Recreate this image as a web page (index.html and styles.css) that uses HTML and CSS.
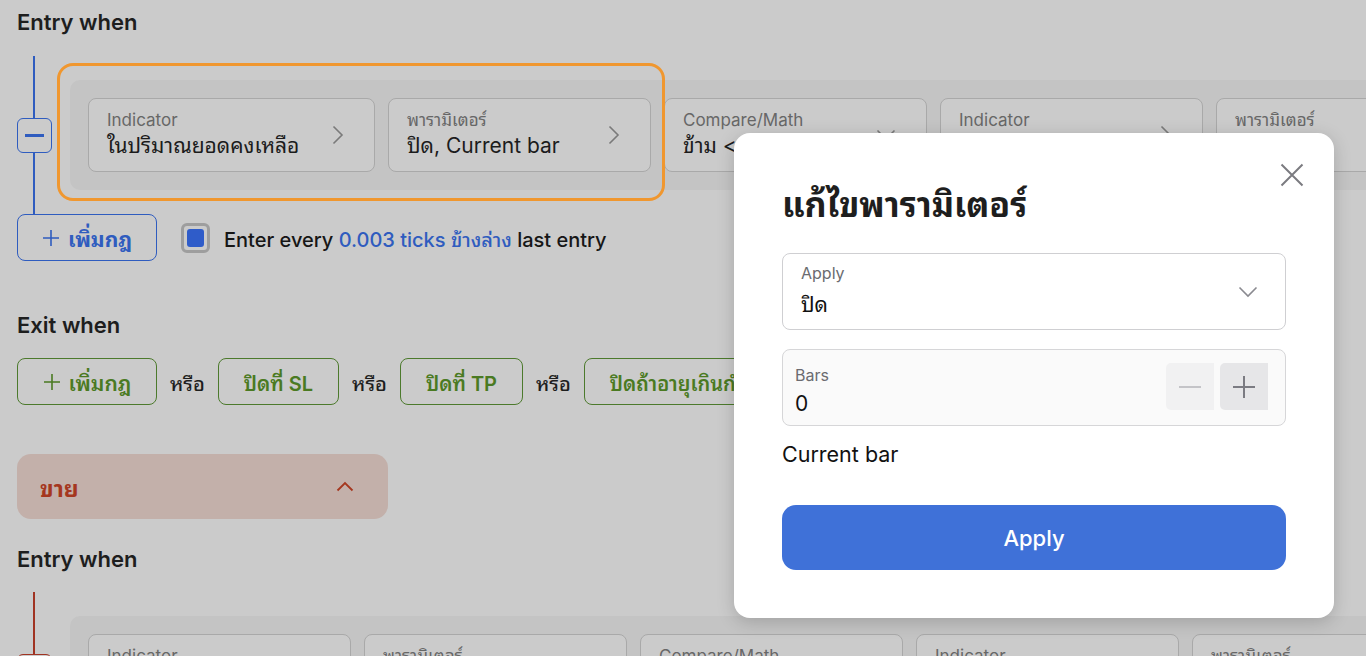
FILE: index.html
```html
<!DOCTYPE html>
<html lang="th">
<head>
<meta charset="utf-8">
<title>แก้ไขพารามิเตอร์</title>
<link rel="stylesheet" href="styles.css">
</head>
<body>
<main class="page">
  <h2 class="heading">Entry when</h2>
  <div class="rule-row">
    <div class="connector blue">
      <span class="line"></span>
      <span class="toggle"><span class="bar"></span></span>
      <span class="line"></span>
    </div>
    <div class="rule-box">
      <div class="card wide">
        <div class="card-text"><div class="label">Indicator</div><div class="value">ในปริมาณยอดคงเหลือ</div></div>
        <svg class="chev" width="12" height="20" viewBox="0 0 12 20"><polyline points="1.5,1.5 10,10 1.5,18.5" fill="none" stroke="#7a7a7a" stroke-width="1.6"/></svg>
      </div>
      <div class="card">
        <div class="card-text"><div class="label">พารามิเตอร์</div><div class="value">ปิด, Current bar</div></div>
        <svg class="chev" width="12" height="20" viewBox="0 0 12 20"><polyline points="1.5,1.5 10,10 1.5,18.5" fill="none" stroke="#7a7a7a" stroke-width="1.6"/></svg>
      </div>
      <div class="card">
        <div class="card-text"><div class="label">Compare/Math</div><div class="value">ข้าม &lt;</div></div>
        <svg class="chev" width="20" height="12" viewBox="0 0 20 12"><polyline points="1.5,1.5 10,10 18.5,1.5" fill="none" stroke="#7a7a7a" stroke-width="1.6"/></svg>
      </div>
      <div class="card">
        <div class="card-text"><div class="label">Indicator</div><div class="value">ราคา</div></div>
        <svg class="chev" width="12" height="20" viewBox="0 0 12 20"><polyline points="1.5,1.5 10,10 1.5,18.5" fill="none" stroke="#7a7a7a" stroke-width="1.6"/></svg>
      </div>
      <div class="card">
        <div class="card-text"><div class="label">พารามิเตอร์</div><div class="value">ปิด</div></div>
        <svg class="chev" width="12" height="20" viewBox="0 0 12 20"><polyline points="1.5,1.5 10,10 1.5,18.5" fill="none" stroke="#7a7a7a" stroke-width="1.6"/></svg>
      </div>
    </div>
    <div class="highlight"></div>
  </div>
  <div class="add-row">
    <button class="btn btn-blue">
      <svg width="18" height="18" viewBox="0 0 18 18"><path d="M9 1v16M1 9h16" stroke="currentColor" stroke-width="1.6"/></svg>
      <span>เพิ่มกฎ</span>
    </button>
    <span class="checkbox"><span class="check-fill"></span></span>
    <span class="entry-text">Enter every <span class="link">0.003 ticks ข้างล่าง</span> last entry</span>
  </div>

  <h2 class="heading exit-heading">Exit when</h2>
  <div class="exit-row">
    <button class="btn btn-green">
      <svg width="18" height="18" viewBox="0 0 18 18"><path d="M9 1v16M1 9h16" stroke="currentColor" stroke-width="1.6"/></svg>
      <span>เพิ่มกฎ</span>
    </button>
    <span class="or">หรือ</span>
    <button class="btn btn-green pad">ปิดที่ SL</button>
    <span class="or">หรือ</span>
    <button class="btn btn-green pad">ปิดที่ TP</button>
    <span class="or">หรือ</span>
    <button class="btn btn-green pad">ปิดถ้าอายุเกินกำหนด</button>
  </div>

  <div class="sell-bar">
    <span>ขาย</span>
    <svg width="18" height="11" viewBox="0 0 18 11"><polyline points="1.5,9.5 9,2 16.5,9.5" fill="none" stroke="#a5371f" stroke-width="1.8"/></svg>
  </div>

  <h2 class="heading entry2">Entry when</h2>
  <div class="rule-row red-row">
    <div class="connector red">
      <span class="line"></span>
      <span class="toggle"><span class="bar"></span></span>
      <span class="line"></span>
    </div>
    <div class="rule-box">
      <div class="card">
        <div class="card-text"><div class="label">Indicator</div><div class="value">ราคาปิด</div></div>
      </div>
      <div class="card">
        <div class="card-text"><div class="label">พารามิเตอร์</div><div class="value">ปิด, Current bar</div></div>
      </div>
      <div class="card">
        <div class="card-text"><div class="label">Compare/Math</div><div class="value">ข้าม</div></div>
      </div>
      <div class="card">
        <div class="card-text"><div class="label">Indicator</div><div class="value">ราคาปิด</div></div>
      </div>
      <div class="card">
        <div class="card-text"><div class="label">พารามิเตอร์</div><div class="value">ปิด</div></div>
      </div>
    </div>
  </div>
</main>

<div class="modal">
  <button class="close" aria-label="close">
    <svg width="24" height="24" viewBox="0 0 24 24"><path d="M1.5 1.5l21 21M22.5 1.5l-21 21" stroke="#7b7b80" stroke-width="2"/></svg>
  </button>
  <h1 class="modal-title">แก้ไขพารามิเตอร์</h1>
  <div class="field select">
    <div class="field-text">
      <div class="f-label">Apply</div>
      <div class="f-value">ปิด</div>
    </div>
    <svg width="20" height="12" viewBox="0 0 20 12"><polyline points="1.5,1.5 10,10 18.5,1.5" fill="none" stroke="#8a8a90" stroke-width="1.6"/></svg>
  </div>
  <div class="field number">
    <div class="field-text">
      <div class="f-label">Bars</div>
      <div class="f-value">0</div>
    </div>
    <div class="stepper">
      <span class="step minus"><svg width="22" height="22" viewBox="0 0 22 22"><path d="M0 11h22" stroke="#c4c4c8" stroke-width="2"/></svg></span>
      <span class="step plus"><svg width="22" height="22" viewBox="0 0 22 22"><path d="M11 0v22M0 11h22" stroke="#7b7b82" stroke-width="2"/></svg></span>
    </div>
  </div>
  <div class="hint">Current bar</div>
  <button class="apply">Apply</button>
</div>
</body>
</html>
```
FILE: styles.css
```css
html, body {
  margin: 0;
  padding: 0;
  overflow: hidden;
  height: 100%;
}
body {
  background: #cbcbcb;
  font-family: Inter, "Noto Sans Thai Looped", Loma, "Noto Sans Thai", "Noto Sans", sans-serif;
  color: #1c1c1c;
}
button {
  font-family: inherit;
  cursor: pointer;
}
.page {
  padding-left: 17px;
}
.heading {
  margin: 0;
  padding-top: 8px;
  font-size: 22px;
  line-height: 28px;
  font-weight: 600;
  color: #1e1e1e;
}
.rule-row {
  position: relative;
  display: flex;
  margin-top: 20px;
  height: 158px;
  gap: 18px;
}
.connector {
  width: 35px;
  flex: none;
  display: flex;
  flex-direction: column;
  align-items: center;
}
.connector .line {
  width: 2px;
  flex: 1;
  margin-right: 1px;
}
.connector.blue .line { background: #2f5cbf; }
.connector.red .line { background: #a03322; }
.toggle {
  width: 35px;
  height: 35px;
  box-sizing: border-box;
  border-radius: 6px;
  display: flex;
  align-items: center;
  justify-content: center;
}
.connector.blue .toggle { border: 1px solid #2f5cbf; }
.connector.red .toggle { border: 1px solid #a03322; }
.toggle .bar {
  width: 19px;
  height: 3px;
}
.connector.blue .bar { background: #2f5cbf; }
.connector.red .bar { background: #a03322; }
.rule-box {
  flex: none;
  margin: 24px 0;
  height: 110px;
  box-sizing: border-box;
  padding: 18px;
  background: #c4c4c4;
  border-radius: 10px 0 0 10px;
  display: flex;
  gap: 13px;
  min-width: 1400px;
}
.card {
  flex: none;
  box-sizing: border-box;
  min-width: 263px;
  height: 74px;
  border: 1px solid #a9a9a9;
  border-radius: 8px;
  background: #cbcbcb;
  padding: 10px 30px 0 18px;
  display: flex;
  align-items: flex-start;
  gap: 26px;
}
.card.wide {
  min-width: 287px;
}
.card-text {
  flex: 1;
  white-space: nowrap;
}
.label {
  font-size: 17px;
  line-height: 22px;
  color: #676767;
}
.value {
  margin-top: 2px;
  font-size: 21px;
  line-height: 26px;
  color: #1c1c1c;
}
.chev {
  flex: none;
  align-self: center;
  margin-top: -10px;
}
.highlight {
  position: absolute;
  left: 40px;
  top: 7px;
  width: 608px;
  height: 138px;
  box-sizing: border-box;
  border: 3px solid #f0972f;
  border-radius: 16px;
  pointer-events: none;
}
.add-row {
  display: flex;
  align-items: center;
  height: 47px;
}
.btn {
  height: 47px;
  box-sizing: border-box;
  border-radius: 8px;
  background: transparent;
  display: inline-flex;
  align-items: center;
  justify-content: center;
  gap: 8px;
  font-size: 21px;
  font-weight: 700;
  white-space: nowrap;
  flex: none;
}
.btn-blue {
  width: 140px;
  border: 1px solid #2f5cbf;
  color: #2f5cbf;
}
.btn-green {
  border: 1px solid #4c7a2c;
  color: #4a7a22;
  font-weight: 600;
}
.btn-green:first-child {
  width: 140px;
}
.btn-green.pad {
  padding: 0 25px;
  font-size: 20px;
}
.checkbox {
  margin-left: 24px;
  width: 29px;
  height: 30px;
  box-sizing: border-box;
  border: 3px solid #9e9e9e;
  border-radius: 6px;
  display: flex;
  align-items: center;
  justify-content: center;
}
.check-fill {
  width: 17px;
  height: 18px;
  border-radius: 3px;
  background: #2f5cc9;
}
.entry-text {
  margin-left: 14px;
  font-size: 20px;
  font-weight: 500;
  color: #161616;
  white-space: nowrap;
}
.link {
  color: #2f5cbf;
}
.exit-heading {
  margin-top: 42px;
}
.exit-row {
  margin-top: 19px;
  display: flex;
  align-items: center;
  gap: 13px;
  white-space: nowrap;
}
.or {
  font-size: 20px;
  font-weight: 500;
  color: #1e1e1e;
}
.sell-bar {
  margin-top: 49px;
  width: 371px;
  height: 65px;
  box-sizing: border-box;
  border-radius: 14px;
  background: #c3b0aa;
  display: flex;
  align-items: center;
  justify-content: space-between;
  padding: 0 34px 0 23px;
  color: #a5371f;
  font-size: 23px;
  font-weight: 700;
}
.entry2 {
  margin-top: 18px;
}
.red-row {
  margin-top: 19px;
}
.modal {
  position: absolute;
  left: 734px;
  top: 133px;
  width: 600px;
  height: 485px;
  box-sizing: border-box;
  padding: 52px 48px 48px;
  background: #ffffff;
  border-radius: 16px;
  box-shadow: 0 4px 18px rgba(0, 0, 0, 0.18);
}
.close {
  position: absolute;
  top: 30px;
  right: 30px;
  width: 24px;
  height: 24px;
  padding: 0;
  border: 0;
  background: none;
}
.modal-title {
  margin: 0;
  font-size: 34px;
  line-height: 40px;
  font-weight: 700;
  color: #1e1e1e;
}
.field {
  box-sizing: border-box;
  height: 77px;
  border-radius: 8px;
  display: flex;
  align-items: center;
}
.select {
  margin-top: 28px;
  border: 1px solid #cfcfd2;
  padding: 0 27px 0 18px;
}
.number {
  margin-top: 19px;
  border: 1px solid #d6d6d8;
  background: #fafafa;
  padding: 0 17px 0 12px;
}
.field-text {
  flex: 1;
}
.f-label {
  font-size: 16px;
  line-height: 20px;
  color: #6b6b70;
}
.f-value {
  margin-top: 6px;
  font-size: 21px;
  line-height: 26px;
  color: #111;
}
.select .field-text { margin-top: -2px; }
.select .f-value { margin-top: 9px; }
.number .field-text { margin-top: 7px; }
.stepper {
  display: flex;
  gap: 6px;
  margin-top: -2px;
}
.step {
  width: 48px;
  height: 47px;
  border-radius: 5px 0 0 5px;
  display: flex;
  align-items: center;
  justify-content: center;
}
.step.minus { background: #f1f1f2; }
.step.plus { background: #e6e6e8; }
.hint {
  margin-top: 14px;
  font-size: 21.5px;
  line-height: 28px;
  color: #111;
}
.apply {
  margin-top: 37px;
  width: 100%;
  height: 65px;
  border: 0;
  border-radius: 14px;
  background: #3f71d8;
  color: #fff;
  font-size: 22px;
  font-weight: 500;
}
```
